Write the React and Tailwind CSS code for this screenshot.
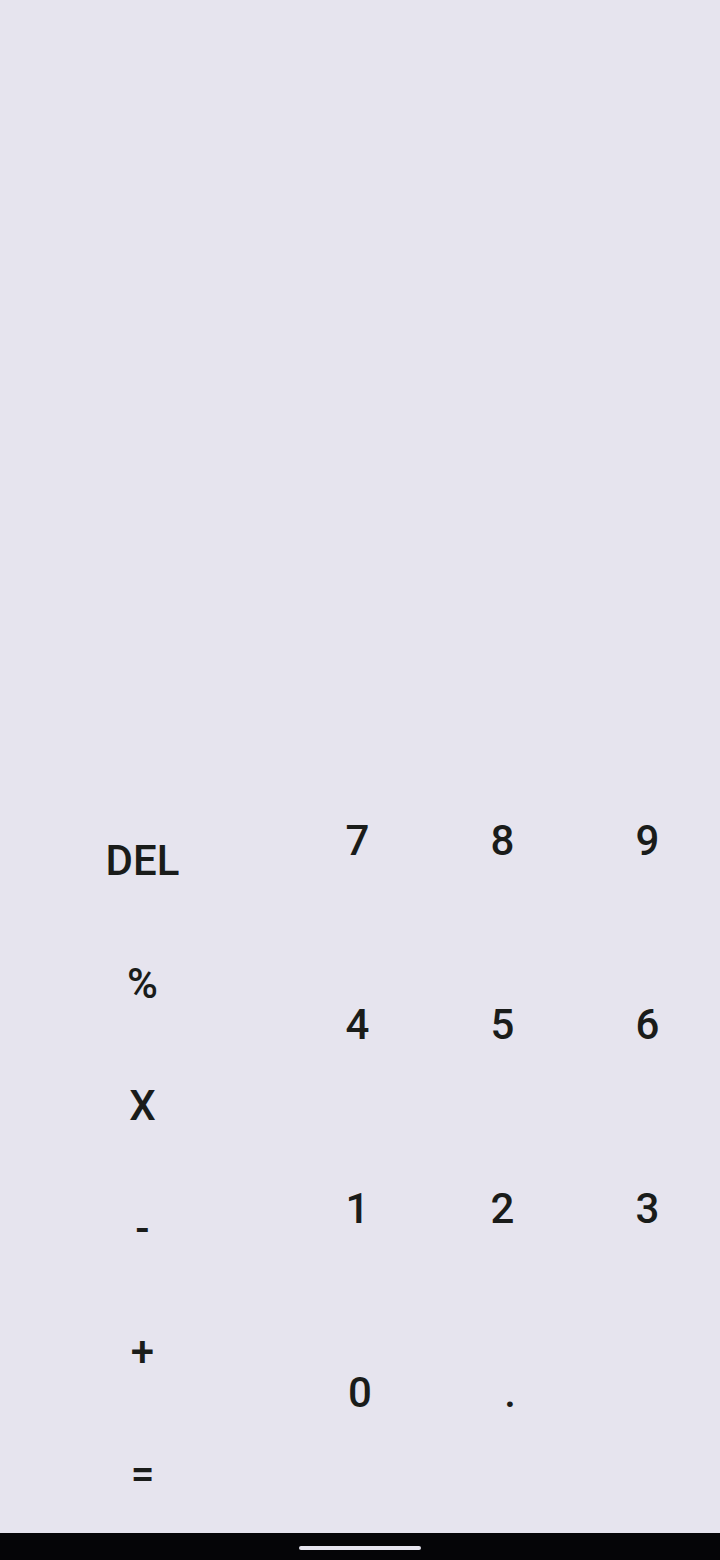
import React from 'react';

const ops = ['DEL', '%', 'X', '-', '+', '='];
const rows = [
  ['7', '8', '9'],
  ['4', '5', '6'],
  ['1', '2', '3'],
];

function App() {
  return (
    <div
      className="flex h-[1560px] flex-col bg-[#e6e4ee] text-[#1a1c1a]"
      style={{ fontFamily: 'Roboto, "Noto Sans", sans-serif' }}
    >
      {/* empty display area */}
      <div className="flex-1" />

      {/* keypad */}
      <div className="flex h-[736px]">
        <div className="flex w-[285px] flex-col">
          {ops.map((op) => (
            <button
              key={op}
              className="flex flex-1 items-center justify-center pt-[5px] text-[42px] font-medium leading-[52px]"
            >
              {op}
            </button>
          ))}
        </div>

        <div className="flex flex-1 flex-col">
          {rows.map((row, i) => (
            <div key={i} className="grid h-[184px] grid-cols-3">
              {row.map((d) => (
                <button
                  key={d}
                  className="flex items-start justify-center pt-[18px] text-[42px] font-medium leading-[52px]"
                >
                  {d}
                </button>
              ))}
            </div>
          ))}
          <div className="flex h-[184px]">
            <button className="flex w-[150px] items-start justify-center pt-[18px] text-[42px] font-medium leading-[52px]">
              0
            </button>
            <button className="flex w-[150px] items-start justify-center pt-[18px] text-[42px] font-medium leading-[52px]">
              .
            </button>
          </div>
        </div>
      </div>

      {/* system nav bar */}
      <div className="flex h-[27px] justify-center bg-[#050507]">
        <div className="mt-[13px] h-[4px] w-[122px] rounded-full bg-[#e6e4ee]" />
      </div>
    </div>
  );
}

export default App;
